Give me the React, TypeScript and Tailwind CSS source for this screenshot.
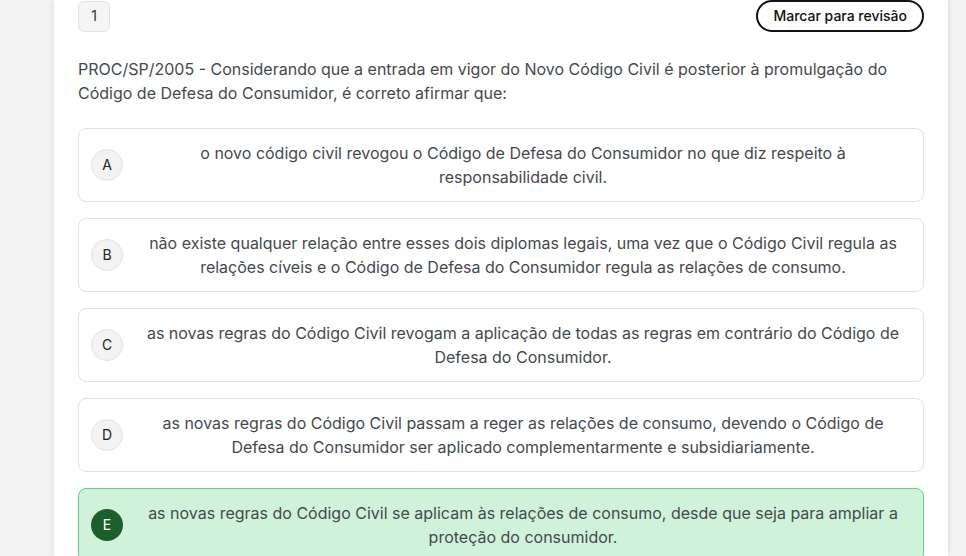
const options = [
  {
    letter: 'A',
    text: 'o novo código civil revogou o Código de Defesa do Consumidor no que diz respeito à responsabilidade civil.',
  },
  {
    letter: 'B',
    text: 'não existe qualquer relação entre esses dois diplomas legais, uma vez que o Código Civil regula as relações cíveis e o Código de Defesa do Consumidor regula as relações de consumo.',
  },
  {
    letter: 'C',
    text: 'as novas regras do Código Civil revogam a aplicação de todas as regras em contrário do Código de Defesa do Consumidor.',
  },
  {
    letter: 'D',
    text: 'as novas regras do Código Civil passam a reger as relações de consumo, devendo o Código de Defesa do Consumidor ser aplicado complementarmente e subsidiariamente.',
  },
  {
    letter: 'E',
    text: 'as novas regras do Código Civil se aplicam às relações de consumo, desde que seja para ampliar a proteção do consumidor.',
    correct: true,
  },
];

export default function App() {
  return (
    <div
      className="h-[556px] overflow-hidden bg-[#f3f3f3]"
      style={{ fontFamily: 'Inter, "Noto Sans", sans-serif' }}
    >
      <div className="ml-[54px] w-[894px] h-full bg-white px-6 shadow-[0_0_6px_rgba(0,0,0,0.12)]">
        <div className="flex items-center justify-between">
          <div className="w-[32px] h-[31px] flex items-center justify-center rounded-md border border-[#e3e3e3] bg-[#f5f5f5] text-sm text-[#333]">
            1
          </div>
          <button className="h-[32px] px-[15px] rounded-full border-2 border-[#111] text-sm font-medium text-[#111] bg-white">
            Marcar para revisão
          </button>
        </div>

        <p className="mt-[25px] text-base leading-6 text-[#45494f]">
          PROC/SP/2005 - Considerando que a entrada em vigor do Novo Código Civil é posterior à promulgação do
          Código de Defesa do Consumidor, é correto afirmar que:
        </p>

        <div className="mt-[23px] flex flex-col gap-4">
          {options.map((opt) => (
            <div
              key={opt.letter}
              className={
                opt.correct
                  ? 'flex items-center gap-3 rounded-lg border border-[#5fd27f] bg-[#d1f2da] px-3 py-3'
                  : 'flex items-center gap-3 rounded-lg border border-[#e2e2e2] bg-white px-3 py-3'
              }
            >
              <div
                className={
                  opt.correct
                    ? 'w-8 h-8 shrink-0 flex items-center justify-center rounded-full bg-[#1c5e2c] text-sm text-white'
                    : 'w-8 h-8 shrink-0 flex items-center justify-center rounded-full border border-[#e3e3e3] bg-[#f3f3f3] text-sm text-[#222]'
                }
              >
                {opt.letter}
              </div>
              <p className="flex-1 text-center text-base leading-6 text-[#45494f]">{opt.text}</p>
            </div>
          ))}
        </div>
      </div>
    </div>
  );
}
